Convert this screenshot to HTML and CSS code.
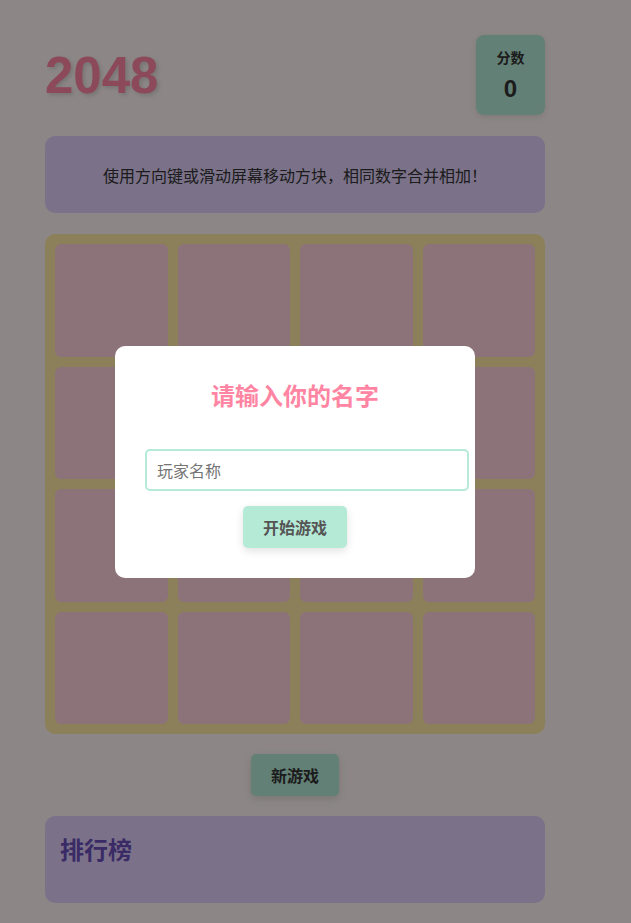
FILE: index.html
```html
<!DOCTYPE html>
<html lang="zh">
<head>
    <meta charset="UTF-8">
    <title>2048</title>
    <link rel="stylesheet" href="styles.css">
</head>
<body>
    <div class="container">
        <div class="header">
            <h1 class="title">2048</h1>
            <div class="score-box">
                <div class="score-label">分数</div>
                <div class="score-value" id="score">0</div>
            </div>
        </div>

        <div class="intro">使用方向键或滑动屏幕移动方块，相同数字合并相加！</div>

        <div class="grid">
            <div class="cell"></div><div class="cell"></div><div class="cell"></div><div class="cell"></div>
            <div class="cell"></div><div class="cell"></div><div class="cell"></div><div class="cell"></div>
            <div class="cell"></div><div class="cell"></div><div class="cell"></div><div class="cell"></div>
            <div class="cell"></div><div class="cell"></div><div class="cell"></div><div class="cell"></div>
        </div>

        <div class="actions">
            <button class="btn">新游戏</button>
        </div>

        <div class="leaderboard">
            <h2>排行榜</h2>
            <ul id="rankList"></ul>
        </div>
    </div>

    <div class="overlay">
        <div class="modal">
            <h2>请输入你的名字</h2>
            <input type="text" class="name-input" placeholder="玩家名称">
            <button class="btn start-btn">开始游戏</button>
        </div>
    </div>
</body>
</html>
```

FILE: styles.css
```css
body {
    margin: 0;
    padding: 20px 45px;
    background-color: #fff5f5;
    font-family: "Noto Sans CJK SC", "Liberation Sans", sans-serif;
    color: #333;
}

.container {
    width: 500px;
}

.header {
    display: flex;
    justify-content: space-between;
    align-items: center;
    height: 80px;
    padding-top: 15px;
    margin-bottom: 21px;
}

.title {
    margin: 0;
    font-family: "Liberation Sans", Arial, sans-serif;
    font-size: 51px;
    font-weight: bold;
    color: #ff85a2;
    text-shadow: 2px 2px 4px rgba(0,0,0,0.15);
}

.score-box {
    width: 69px;
    height: 80px;
    box-sizing: border-box;
    padding-top: 12px;
    background-color: #b5ead7;
    border-radius: 8px;
    text-align: center;
    box-shadow: 0 2px 6px rgba(0,0,0,0.1);
}

.score-label {
    font-size: 14px;
    font-weight: bold;
    line-height: 20px;
}

.score-value {
    margin-top: 8px;
    font-family: "Liberation Sans", Arial, sans-serif;
    font-size: 24px;
    font-weight: bold;
    line-height: 28px;
}

.intro {
    height: 77px;
    display: flex;
    align-items: center;
    justify-content: center;
    background-color: #e0d0fa;
    border-radius: 10px;
    font-size: 16px;
    margin-bottom: 21px;
}

.grid {
    display: grid;
    grid-template-columns: repeat(4, 1fr);
    grid-template-rows: repeat(4, 1fr);
    gap: 10px;
    padding: 10px;
    width: 500px;
    height: 500px;
    box-sizing: border-box;
    background-color: #ffeaa7;
    border-radius: 10px;
}

.cell {
    background-color: #ffd1dc;
    border-radius: 6px;
}

.actions {
    text-align: center;
    margin: 20px 0;
}

.btn {
    padding: 10px 20px;
    font-family: "Noto Sans CJK SC", sans-serif;
    font-size: 16px;
    font-weight: bold;
    line-height: 22px;
    color: #333;
    background-color: #b5ead7;
    border: none;
    border-radius: 5px;
    box-shadow: 0 3px 8px rgba(0,0,0,0.12);
    cursor: pointer;
}

.leaderboard {
    padding: 15px;
    min-height: 57px;
    background-color: #e0d0fa;
    border-radius: 10px;
}

.leaderboard h2 {
    margin: 0;
    font-size: 24px;
    color: #6b4fbb;
}

.leaderboard ul {
    margin: 0;
    padding: 0;
    list-style: none;
}

.overlay {
    position: fixed;
    top: 0;
    left: 0;
    right: 0;
    bottom: 0;
    padding-right: 41px;
    display: flex;
    align-items: center;
    justify-content: center;
    background-color: rgba(0,0,0,0.45);
}

.modal {
    width: 300px;
    padding: 30px;
    background-color: #fff;
    border-radius: 10px;
    text-align: center;
}

.modal h2 {
    margin: 3px 0 38px;
    font-size: 24px;
    line-height: 32px;
    color: #ff85a2;
}

.name-input {
    display: block;
    width: 100%;
    padding: 10px;
    font-family: "Noto Sans CJK SC", sans-serif;
    font-size: 16px;
    line-height: 18px;
    border: 2px solid #b5ead7;
    border-radius: 5px;
    outline: none;
    margin-bottom: 15px;
}

.name-input::placeholder {
    color: #757575;
}

.start-btn {
    color: #555;
}
```
